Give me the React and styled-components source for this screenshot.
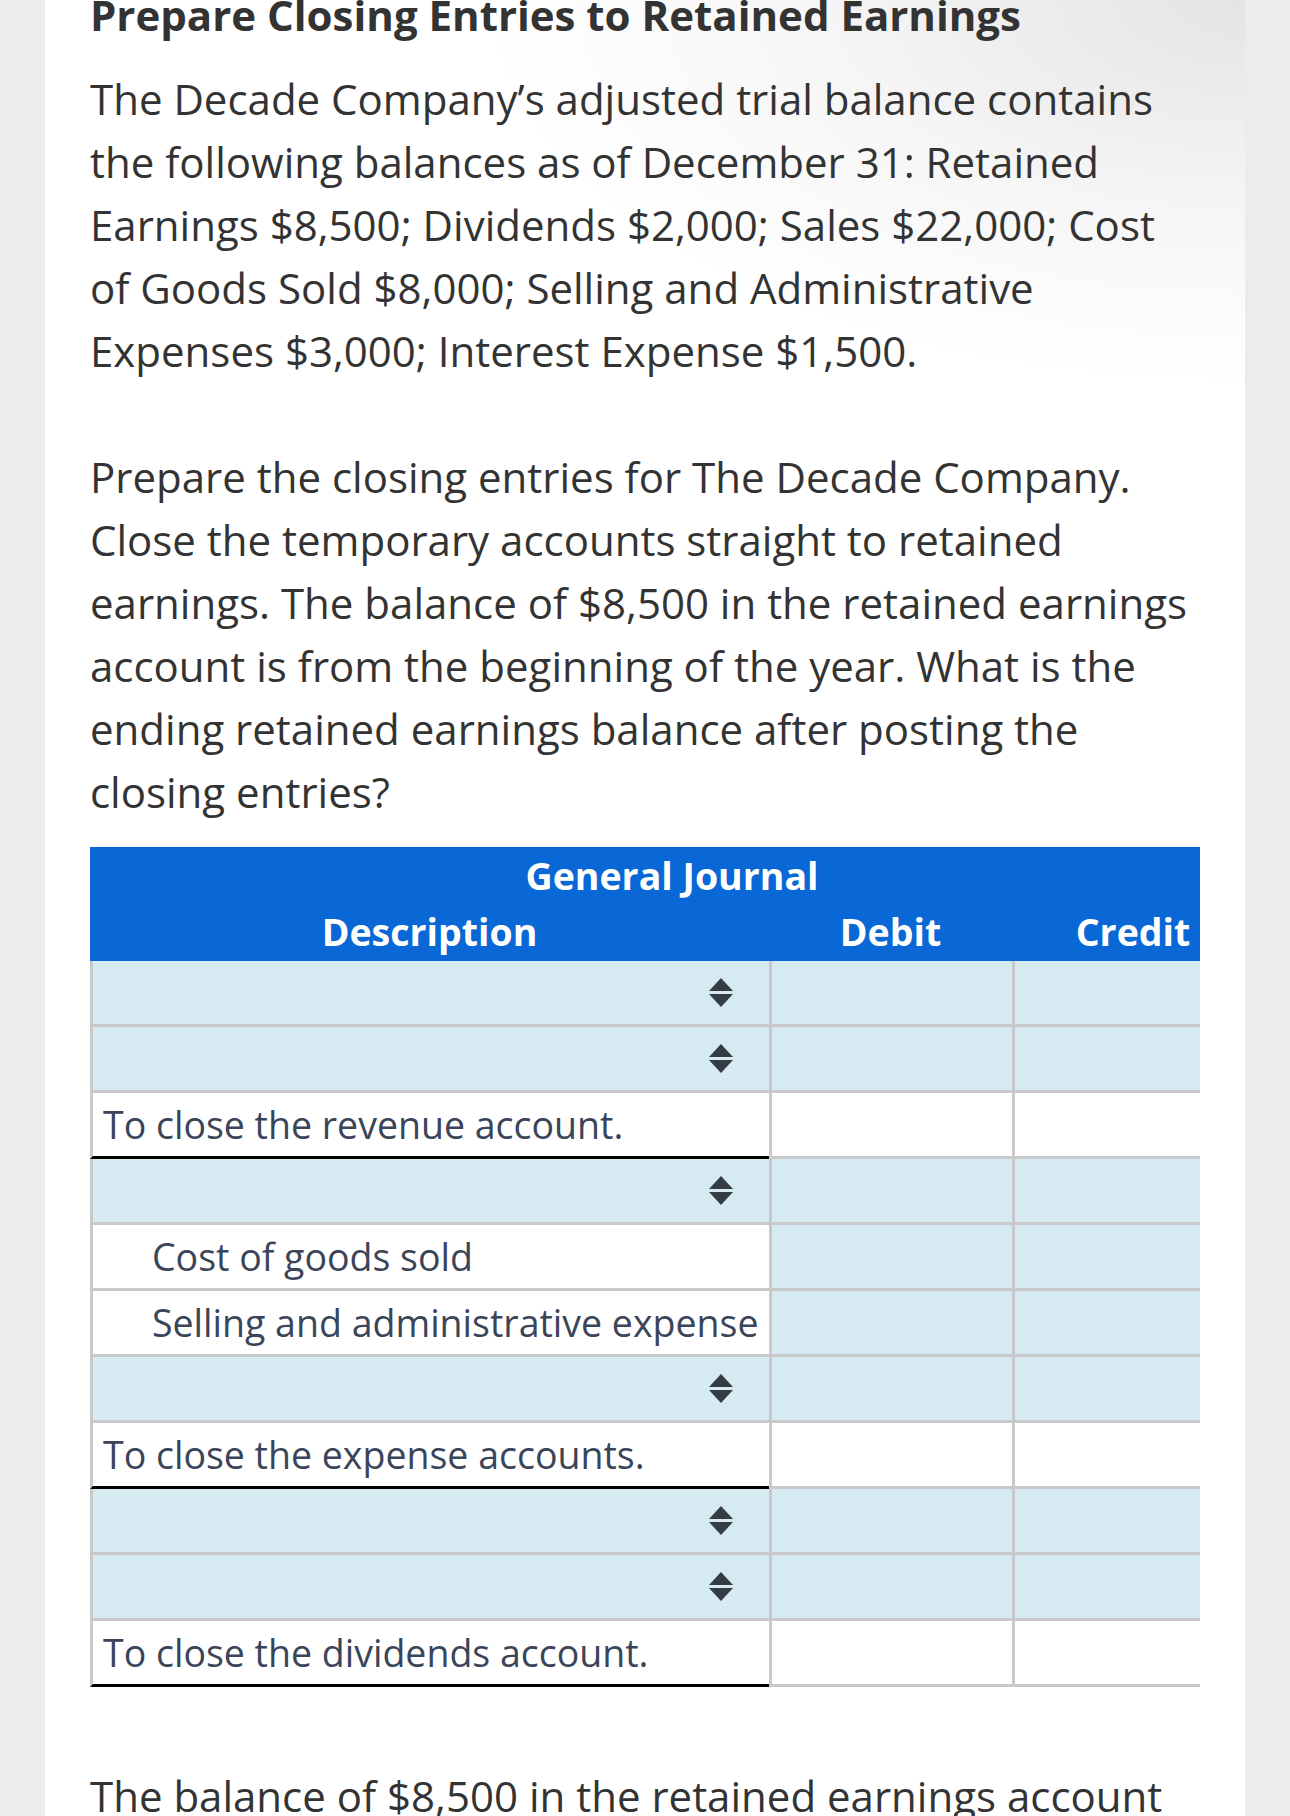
import React from 'react'
import styled, { createGlobalStyle } from 'styled-components'

const GlobalStyle = createGlobalStyle`
  html, body {
    margin: 0;
    padding: 0;
    background: #ebecee;
  }
  body {
    font-family: 'Open Sans', 'Noto Sans', sans-serif;
  }
`

const Page = styled.div`
  display: flex;
  padding-left: 45px;
  height: 1816px;
  overflow: hidden;
`

const Card = styled.div`
  width: 1200px;
  padding: 0 45px;
  box-sizing: border-box;
  background: radial-gradient(ellipse 950px 480px at 100% 0%, #e4e4e4 0%, #f6f6f6 45%, #ffffff 80%);
`

const Title = styled.h2`
  margin: -17px 0 21px;
  font-size: 42px;
  line-height: 63px;
  font-weight: 700;
  color: #333;
  white-space: nowrap;
`

const Para = styled.p`
  margin: 0 0 ${(p) => (p.$tight ? 24 : 63)}px;
  font-size: 42px;
  line-height: 63px;
  color: #333;
`

const Scroller = styled.div`
  width: 1110px;
  overflow: hidden;
`

const Journal = styled.div`
  width: 1164px;
`

const Header = styled.div`
  background: #0a67d6;
  color: #fff;
  font-weight: 700;
  font-size: 37.5px;
  height: 114px;
  display: flex;
  flex-direction: column;
`

const HeaderTitle = styled.div`
  text-align: center;
  line-height: 56px;
  padding-top: 1px;
`

const Cols = styled.div`
  display: grid;
  grid-template-columns: 679px 243px 242px;
  line-height: 56px;
  text-align: center;
`

const Row = styled.div`
  display: grid;
  grid-template-columns: 679px 243px 242px;
  height: 66px;
`

const Cell = styled.div`
  box-sizing: border-box;
  border-bottom: 3px solid ${(p) => (p.$total ? '#000' : '#c9c9cc')};
  border-left: 3px solid #c9c9cc;
  background: ${(p) => (p.$fill ? '#d5eaf1' : '#fff')};
  display: flex;
  align-items: center;
  justify-content: ${(p) => (p.$select ? 'flex-end' : 'flex-start')};
  padding-left: ${(p) => (p.$indent ? 59 : 10)}px;
  padding-right: ${(p) => (p.$select ? 36 : 0)}px;
  font-size: 37.5px;
  color: #3a4559;
  white-space: nowrap;
`

const Caret = () => (
  <svg width="24" height="29" viewBox="0 0 24 29">
    <polygon points="0,13 12,0 24,13" fill="#343c44" />
    <polygon points="0,16 24,16 12,29" fill="#343c44" />
  </svg>
)

const rows = [
  { select: true },
  { select: true },
  { text: 'To close the revenue account.', total: true },
  { select: true },
  { text: 'Cost of goods sold', indent: true, amounts: true },
  { text: 'Selling and administrative expense', indent: true, amounts: true },
  { select: true },
  { text: 'To close the expense accounts.', total: true },
  { select: true },
  { select: true },
  { text: 'To close the dividends account.', total: true },
]

const Tail = styled.p`
  margin: 77px 0 0;
  font-size: 42px;
  line-height: 63px;
  color: #333;
  white-space: nowrap;
`

export default function App() {
  return (
    <>
      <GlobalStyle />
      <Page>
        <Card>
          <Title>Prepare Closing Entries to Retained Earnings</Title>
          <Para>
            The Decade Company’s adjusted trial balance contains the following balances as of
            December 31: Retained Earnings $8,500; Dividends $2,000; Sales $22,000; Cost of Goods
            Sold $8,000; Selling and Administrative Expenses $3,000; Interest Expense $1,500.
          </Para>
          <Para $tight>
            Prepare the closing entries for The Decade Company. Close the temporary accounts
            straight to retained earnings. The balance of $8,500 in the retained earnings account
            is from the beginning of the year. What is the ending retained earnings balance after
            posting the closing entries?
          </Para>
          <Scroller>
            <Journal>
              <Header>
                <HeaderTitle>General Journal</HeaderTitle>
                <Cols>
                  <span>Description</span>
                  <span>Debit</span>
                  <span>Credit</span>
                </Cols>
              </Header>
              {rows.map((r, i) => (
                <Row key={i}>
                  <Cell $fill={r.select} $select={r.select} $indent={r.indent} $total={r.total}>
                    {r.select ? <Caret /> : r.text}
                  </Cell>
                  <Cell $fill={r.select || r.amounts} />
                  <Cell $fill={r.select || r.amounts} />
                </Row>
              ))}
            </Journal>
          </Scroller>
          <Tail>The balance of $8,500 in the retained earnings account</Tail>
        </Card>
      </Page>
    </>
  )
}
